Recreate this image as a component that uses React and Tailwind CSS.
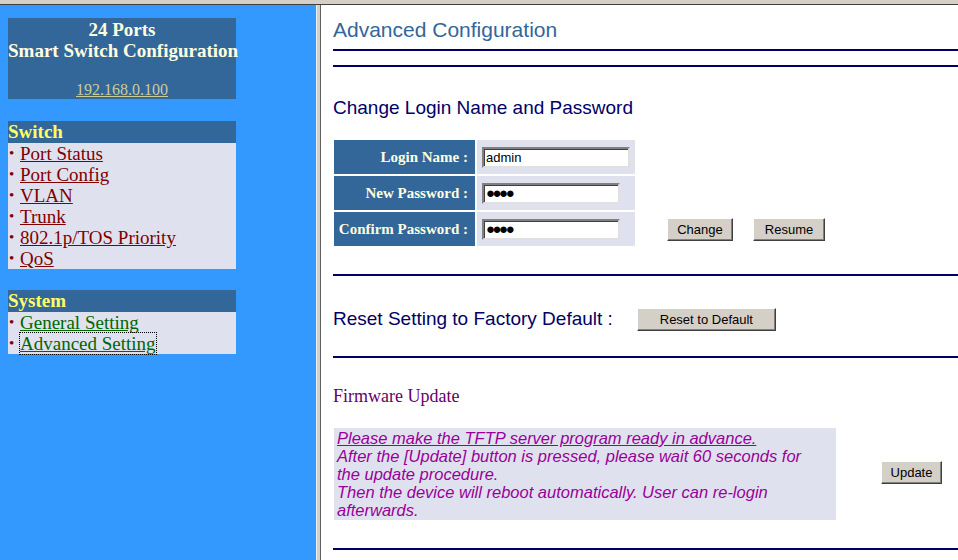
import React from 'react';

const serif = { fontFamily: '"Liberation Serif", "Times New Roman", serif' };
const sans = { fontFamily: '"Liberation Sans", Arial, sans-serif' };

function WinButton({ children, className = '' }) {
  return (
    <button
      type="button"
      style={sans}
      className={`bg-[#d4d0c8] text-black text-[13px] leading-none border border-t-white border-l-white border-b-[#404040] border-r-[#404040] shadow-[inset_-1px_-1px_0_#808080] ${className}`}
    >
      {children}
    </button>
  );
}

function NavGroup({ title, items, linkColor }) {
  return (
    <div className="w-[228px]">
      <div className="h-[22px] bg-[#336699] text-[#ffff66] font-bold text-[19px] leading-[22px]" style={serif}>
        {title}
      </div>
      <ul className="bg-[#dfe2ee]">
        {items.map((item) => (
          <li key={item.label} className="h-[21px] flex items-center text-[19px] leading-[21px]" style={serif}>
            <span className="text-[#800000] text-[15px] w-[12px] pl-[1px]">•</span>
            <a
              href="#"
              className={`underline ${linkColor} ${item.focused ? 'outline-1 outline-dotted outline-black' : ''}`}
            >
              {item.label}
            </a>
          </li>
        ))}
      </ul>
    </div>
  );
}

function Rule({ className = '' }) {
  return <div className={`h-[2px] bg-[#000066] ${className}`} />;
}

export default function App() {
  const switchItems = [
    { label: 'Port Status' },
    { label: 'Port Config' },
    { label: 'VLAN' },
    { label: 'Trunk' },
    { label: '802.1p/TOS Priority' },
    { label: 'QoS' },
  ];
  const systemItems = [
    { label: 'General Setting' },
    { label: 'Advanced Setting', focused: true },
  ];

  const rows = [
    { label: 'Login Name :', value: 'admin', width: 'w-[148px]', dots: false },
    { label: 'New Password :', value: '●●●●', width: 'w-[138px]', dots: true },
    { label: 'Confirm Password :', value: '●●●●', width: 'w-[138px]', dots: true },
  ];

  return (
    <div className="w-[958px] h-[560px] flex flex-col overflow-hidden bg-white">
      {/* browser chrome strip */}
      <div className="h-[4px] bg-[#d4d0c8] border-b border-[#404040] shrink-0 box-content" />

      <div className="flex flex-1 min-h-0">
        {/* left frame */}
        <aside className="w-[316px] bg-[#3399ff] pt-[13px] pl-[8px] flex flex-col">
          <div className="w-[228px] h-[81px] bg-[#336699] text-center pt-[1px]" style={serif}>
            <div className="text-[#ffffe0] font-bold text-[19px] leading-[21px]">24 Ports</div>
            <div className="text-[#ffffe0] font-bold text-[19px] leading-[21px] whitespace-nowrap">Smart Switch Configuration</div>
            <a href="#" className="block mt-[20px] text-[#cccc99] underline text-[16px] leading-[18px]">192.168.0.100</a>
          </div>
          <div className="mt-[22px]">
            <NavGroup title="Switch" items={switchItems} linkColor="text-[#800000]" />
          </div>
          <div className="mt-[21px]">
            <NavGroup title="System" items={systemItems} linkColor="text-[#006600]" />
          </div>
        </aside>

        {/* frame divider */}
        <div className="flex shrink-0">
          <div className="w-[1px] bg-[#e8f0fb]" />
          <div className="w-[3px] bg-[#d4d0c8]" />
          <div className="w-[1px] bg-[#606060]" />
        </div>

        {/* right frame */}
        <main className="flex-1 min-w-0 pl-[12px]" style={sans}>
          <h1 className="mt-[14px] text-[21px] leading-[22px] text-[#336699] whitespace-nowrap">Advanced Configuration</h1>
          <Rule className="mt-[8px]" />
          <Rule className="mt-[14px]" />

          <h2 className="mt-[30px] text-[19px] leading-[22px] text-[#000066]">Change Login Name and Password</h2>

          <div className="mt-[19px] flex items-end">
            <table className="border-separate border-spacing-[2px] -ml-[1px]">
              <tbody>
                {rows.map((r) => (
                  <tr key={r.label}>
                    <td
                      className="w-[141px] h-[34px] bg-[#336699] text-[#ffffe0] font-bold text-[15px] text-right pr-[7px] whitespace-nowrap"
                      style={serif}
                    >
                      {r.label}
                    </td>
                    <td className="w-[158px] bg-[#dfe2ee] pl-[5px]">
                      <input
                        type="text"
                        defaultValue={r.value}
                        readOnly
                        className={`${r.width} h-[21px] bg-white ${r.dots ? 'text-[15px] tracking-[-2.5px]' : 'text-[13px]'} px-[2px] text-black border-2 border-t-[#808080] border-l-[#808080] border-b-[#e0e0e0] border-r-[#e0e0e0] shadow-[inset_1px_1px_0_#404040] outline-none`}
                        style={sans}
                      />
                    </td>
                  </tr>
                ))}
              </tbody>
            </table>
            <div className="flex gap-[20px] ml-[30px] mb-[7px]">
              <WinButton className="w-[66px] h-[23px]">Change</WinButton>
              <WinButton className="w-[72px] h-[23px]">Resume</WinButton>
            </div>
          </div>

          <Rule className="mt-[26px]" />

          <div className="mt-[31px] flex items-center h-[24px]">
            <span className="text-[19px] text-[#000066] whitespace-nowrap">Reset Setting to Factory Default :</span>
            <WinButton className="ml-[24px] w-[139px] h-[23px]">Reset to Default</WinButton>
          </div>

          <Rule className="mt-[25px]" />

          <h3 className="mt-[27px] text-[18px] leading-[22px] text-[#660066]" style={serif}>Firmware Update</h3>

          <div className="mt-[21px] flex items-center">
            <div className="w-[502px] h-[92px] bg-[#dfe2ee] ml-[1px] pl-[3px] pr-[20px] pt-[1px] text-[16.5px] leading-[18px] italic text-[#990099]">
              <div className="underline">Please make the TFTP server program ready in advance.</div>
              <div>After the [Update] button is pressed, please wait 60 seconds for the update procedure.</div>
              <div>Then the device will reboot automatically. User can re-login afterwards.</div>
            </div>
            <WinButton className="ml-[45px] mb-[4px] w-[61px] h-[23px]">Update</WinButton>
          </div>

          <Rule className="mt-[28px]" />
        </main>
      </div>
    </div>
  );
}
